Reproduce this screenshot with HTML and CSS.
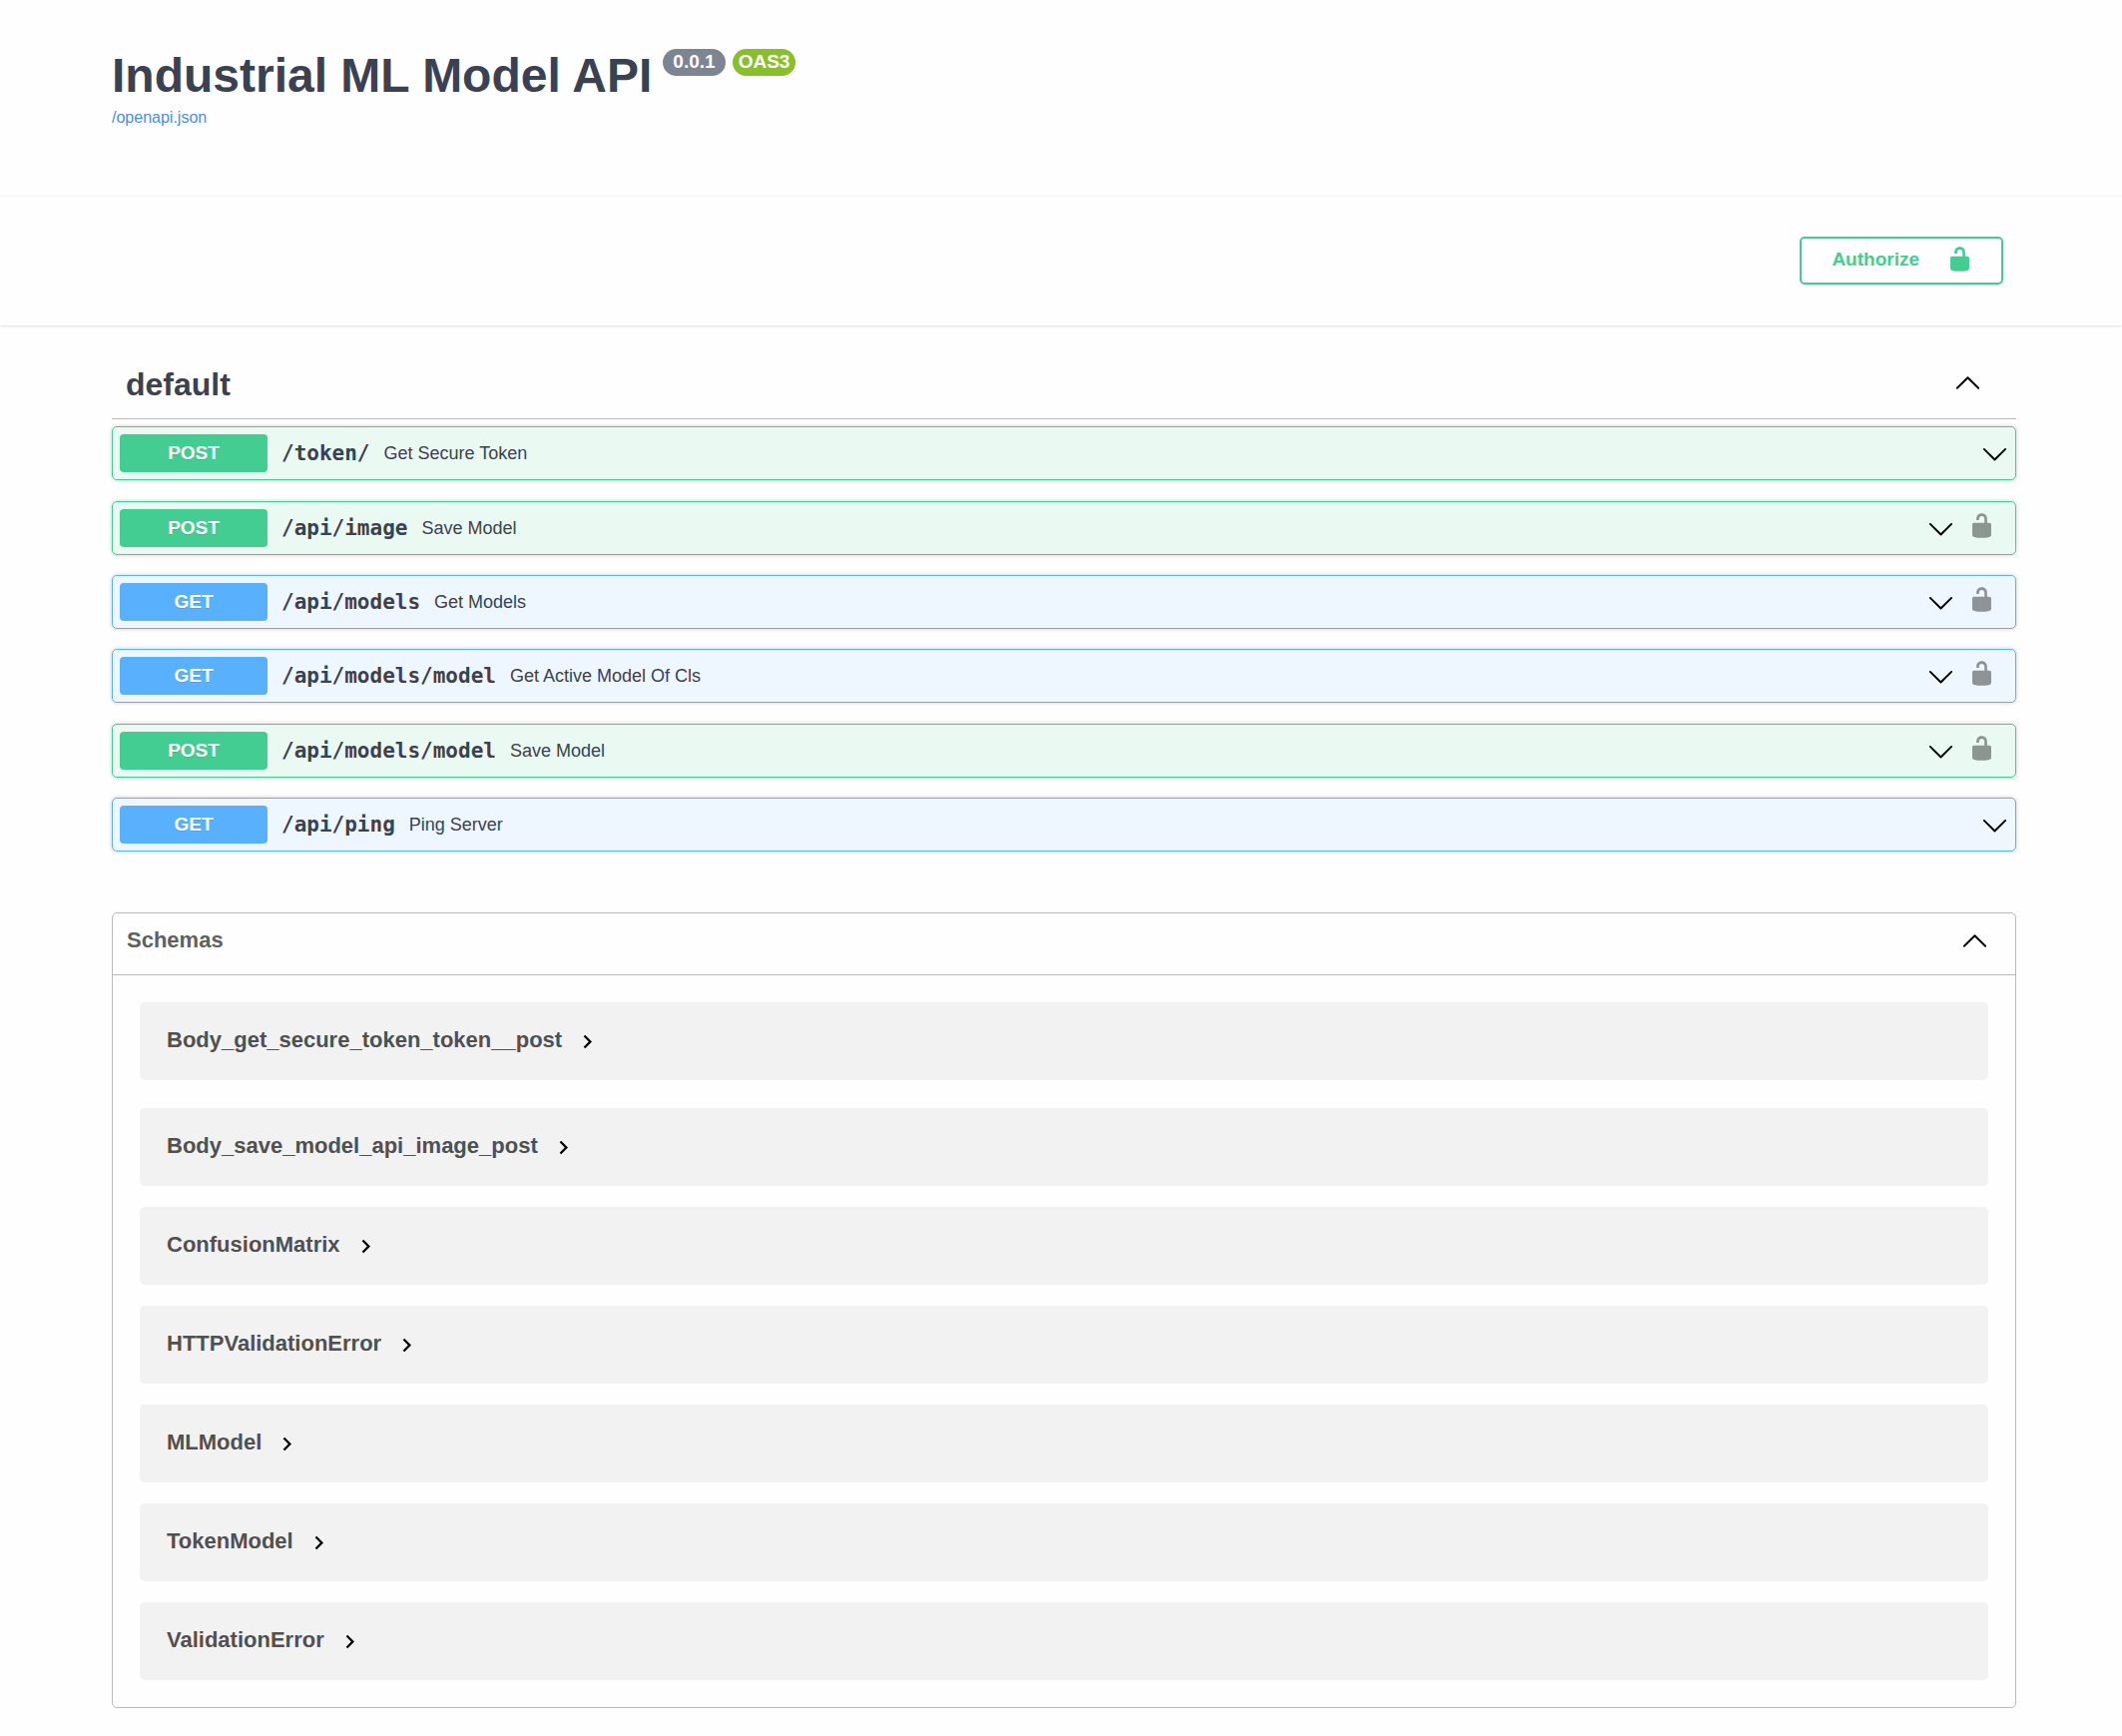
FILE: index.html
```html
<!DOCTYPE html>
<html lang="en">
<head>
<meta charset="utf-8">
<meta name="viewport" content="width=device-width, initial-scale=1">
<title>Industrial ML Model API</title>
<link rel="stylesheet" href="styles.css">
</head>
<body>
<svg class="symbols" aria-hidden="true">
  <symbol id="arrow-down" viewBox="0 0 20 20"><path d="M17.418 6.109c.272-.268.709-.268.979 0s.271.701 0 .969l-7.908 7.83c-.27.268-.707.268-.979 0l-7.908-7.83c-.27-.268-.27-.701 0-.969.271-.268.709-.268.979 0L10 13.25l7.418-7.141z"/></symbol>
  <symbol id="arrow-up" viewBox="0 2 20 20"><path d="M17.418 14.908c.272.268.709.268.979 0s.271-.701 0-.969l-7.908-7.83c-.27-.268-.707-.268-.979 0l-7.908 7.83c-.27.268-.27.701 0 .969.271.268.709.268.979 0L10 7.767l7.418 7.141z"/></symbol>
  <symbol id="arrow-right" viewBox="0 0 24 24"><path d="M10 6L8.59 7.41 13.17 12l-4.58 4.59L10 18l6-6z"/></symbol>
  <symbol id="unlocked" viewBox="0 0 20 20"><path d="M15.8 8H14V5.6C14 2.703 12.665 1 10 1 7.334 1 6 2.703 6 5.6V6h2v-.801C8 3.754 8.797 3 10 3c1.203 0 2 .754 2 2.199V8H4c-.553 0-1 .646-1 1.199V17c0 .549.428 1.139.951 1.307l1.197.387C5.672 18.861 6.55 19 7.1 19h5.8c.549 0 1.428-.139 1.951-.307l1.196-.387c.524-.167.953-.757.953-1.306V9.199C17 8.646 16.352 8 15.8 8z"/></symbol>
</svg>

<header class="wrapper info">
  <div class="info-heading">
    <h1 class="title">Industrial ML Model API</h1>
    <div class="badges">
      <span class="badge badge-version">0.0.1</span>
      <span class="badge badge-oas">OAS3</span>
    </div>
  </div>
  <a class="spec-link" href="/openapi.json">/openapi.json</a>
</header>

<div class="scheme-container">
  <div class="wrapper schemes">
    <button class="authorize" type="button"><span>Authorize</span><svg class="icon"><use href="#unlocked"/></svg></button>
  </div>
</div>

<main class="wrapper">
  <section class="tag-section">
    <h2 class="tag-heading"><button class="tag-toggle" type="button" aria-expanded="true"><span>default</span><svg class="icon"><use href="#arrow-up"/></svg></button></h2>
    <div class="operations">
      <div class="opblock post">
        <button class="summary" type="button"><span class="method">POST</span><span class="path">/token/</span><span class="description">Get Secure Token</span><svg class="icon"><use href="#arrow-down"/></svg></button>
      </div>
      <div class="opblock post">
        <button class="summary" type="button"><span class="method">POST</span><span class="path">/api/image</span><span class="description">Save Model</span><svg class="icon"><use href="#arrow-down"/></svg></button>
        <button class="lock" type="button" aria-label="Authorization button unlocked"><svg class="icon"><use href="#unlocked"/></svg></button>
      </div>
      <div class="opblock get">
        <button class="summary" type="button"><span class="method">GET</span><span class="path">/api/models</span><span class="description">Get Models</span><svg class="icon"><use href="#arrow-down"/></svg></button>
        <button class="lock" type="button" aria-label="Authorization button unlocked"><svg class="icon"><use href="#unlocked"/></svg></button>
      </div>
      <div class="opblock get">
        <button class="summary" type="button"><span class="method">GET</span><span class="path">/api/models/model</span><span class="description">Get Active Model Of Cls</span><svg class="icon"><use href="#arrow-down"/></svg></button>
        <button class="lock" type="button" aria-label="Authorization button unlocked"><svg class="icon"><use href="#unlocked"/></svg></button>
      </div>
      <div class="opblock post">
        <button class="summary" type="button"><span class="method">POST</span><span class="path">/api/models/model</span><span class="description">Save Model</span><svg class="icon"><use href="#arrow-down"/></svg></button>
        <button class="lock" type="button" aria-label="Authorization button unlocked"><svg class="icon"><use href="#unlocked"/></svg></button>
      </div>
      <div class="opblock get">
        <button class="summary" type="button"><span class="method">GET</span><span class="path">/api/ping</span><span class="description">Ping Server</span><svg class="icon"><use href="#arrow-down"/></svg></button>
      </div>
    </div>
  </section>

  <section class="models">
    <h2 class="models-heading"><button class="models-toggle" type="button" aria-expanded="true"><span class="models-title">Schemas</span><svg class="icon"><use href="#arrow-up"/></svg></button></h2>
    <div class="model-list">
      <div class="model"><button class="model-toggle" type="button"><span class="model-name">Body_get_secure_token_token__post</span><svg class="icon"><use href="#arrow-right"/></svg></button></div>
      <div class="model"><button class="model-toggle" type="button"><span class="model-name">Body_save_model_api_image_post</span><svg class="icon"><use href="#arrow-right"/></svg></button></div>
      <div class="model"><button class="model-toggle" type="button"><span class="model-name">ConfusionMatrix</span><svg class="icon"><use href="#arrow-right"/></svg></button></div>
      <div class="model"><button class="model-toggle" type="button"><span class="model-name">HTTPValidationError</span><svg class="icon"><use href="#arrow-right"/></svg></button></div>
      <div class="model"><button class="model-toggle" type="button"><span class="model-name">MLModel</span><svg class="icon"><use href="#arrow-right"/></svg></button></div>
      <div class="model"><button class="model-toggle" type="button"><span class="model-name">TokenModel</span><svg class="icon"><use href="#arrow-right"/></svg></button></div>
      <div class="model"><button class="model-toggle" type="button"><span class="model-name">ValidationError</span><svg class="icon"><use href="#arrow-right"/></svg></button></div>
    </div>
  </section>
</main>
</body>
</html>
```
FILE: styles.css
```css
*,
*::before,
*::after {
  box-sizing: border-box;
}

body {
  margin: 0;
  background: #fefefe;
  color: #3b4151;
  font-family: "Liberation Sans", Arial, sans-serif;
}

h1,
h2 {
  margin: 0;
}

button {
  padding: 0;
  border: 0;
  background: none;
  color: inherit;
  font: inherit;
  text-align: left;
  cursor: pointer;
}

.symbols {
  display: none;
}

.icon {
  flex: none;
  width: 27px;
  height: 27px;
  fill: #000;
}

.wrapper {
  max-width: 1962px;
  margin: 0 auto;
  padding: 0 24px 0 30px;
}

/* API title */
.info {
  padding-top: 48px;
  padding-bottom: 68px;
}

.info-heading {
  display: flex;
  align-items: flex-start;
  gap: 11px;
  margin-bottom: 4px;
}

.title {
  font-size: 48px;
  line-height: 56px;
}

.badges {
  display: flex;
  gap: 7px;
  padding-top: 1px;
}

.badge {
  padding: 0 6px 2px;
  border-radius: 14px;
  color: #fff;
  font-size: 19px;
  font-weight: 700;
  line-height: 25px;
}

.badge-version {
  padding: 0 10px 2px;
  background: #7d8492;
}

.badge-oas {
  background: #89bf2c;
}

.spec-link {
  display: block;
  width: fit-content;
  color: #4990e2;
  font-size: 16px;
  line-height: 20px;
  text-decoration: none;
}

/* Authorization bar */
.scheme-container {
  padding: 40px 0 41px;
  border-top: 1px solid #f8f8f8;
  background: #fefefe;
  box-shadow: 0 1px 2px rgba(0, 0, 0, 0.12);
}

.schemes {
  display: flex;
  justify-content: flex-end;
}

.authorize {
  display: flex;
  align-items: center;
  gap: 27px;
  margin-right: 13px;
  padding: 7px 28px 10px 30px;
  border: 2px solid #43cd93;
  border-radius: 5px;
  box-shadow: 0 1px 2px rgba(0, 0, 0, 0.1);
  color: #43cd93;
  font-size: 19px;
  font-weight: 700;
}

.authorize .icon {
  fill: #43cd93;
}

/* Operations */
.tag-section {
  padding-top: 25px;
}

.tag-heading {
  margin-bottom: 7px;
  border-bottom: 1px solid #b9bac0;
  font-size: 32px;
  line-height: 40px;
}

.tag-toggle {
  display: flex;
  align-items: center;
  justify-content: space-between;
  width: 100%;
  padding: 14px 35px 14px 14px;
}

.opblock {
  display: flex;
  margin-top: 20px;
  border: 1px solid;
  border-radius: 5px;
  box-shadow: 0 0 4px rgba(0, 0, 0, 0.19);
}

.opblock:first-child {
  margin-top: 0;
}

.opblock:nth-child(3n + 2) {
  margin-top: 21px;
}

.post {
  border-color: #43cd93;
  background: #eafaf3;
}

.get {
  border-color: #59b1fd;
  background: #eef6ff;
}

.summary {
  display: flex;
  flex: 1;
  align-items: center;
  gap: 14px;
  padding: 7px;
}

.summary .icon {
  margin-left: auto;
}

.method {
  width: 148px;
  border-radius: 4px;
  color: #fff;
  font-size: 19px;
  font-weight: 700;
  line-height: 38px;
  text-align: center;
  text-shadow: 0 1px 0 rgba(0, 0, 0, 0.1);
}

.post .method {
  background: #43cd93;
}

.get .method {
  background: #59b1fd;
}

.path {
  font-family: "DejaVu Sans Mono", monospace;
  font-size: 21px;
  font-weight: 700;
}

.description {
  font-size: 18px;
}

.lock {
  display: flex;
  align-items: center;
  padding: 0 20px 5px 7px;
  opacity: 0.4;
}

/* Schemas */
.models {
  margin-top: 61px;
  margin-bottom: 27px;
  border: 1px solid #b9bac0;
  border-radius: 5px;
}

.models-heading {
  border-bottom: 1px solid #b9bac0;
  color: #606060;
  font-size: 22px;
  line-height: 25px;
}

.models-toggle {
  display: flex;
  align-items: center;
  justify-content: space-between;
  width: 100%;
  padding: 14px 27px 16px 14px;
}

.models-title {
  padding-bottom: 6px;
}

.model-list {
  padding: 27px;
}

.model {
  margin-top: 21px;
  padding: 25px 27px;
  border-radius: 5px;
  background: #f2f2f2;
}

.model:first-child {
  margin-top: 0;
}

.model:nth-child(2) {
  margin-top: 28px;
}

.model-toggle {
  display: flex;
  align-items: center;
  gap: 12px;
  color: #505050;
  font-size: 22px;
  font-weight: 700;
  line-height: 26px;
}

.model-name {
  padding-bottom: 2px;
}
```
